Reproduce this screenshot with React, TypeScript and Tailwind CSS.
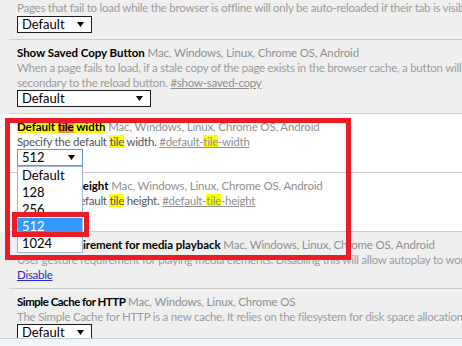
import React from "react";

const FONT = { fontFamily: "Lato, 'Open Sans', sans-serif" };

function Arrow() {
  return (
    <svg width="7" height="5" viewBox="0 0 7 5" className="block">
      <path d="M0 0 L7 0 L3.5 5 Z" fill="#000" />
    </svg>
  );
}

function Select({ label, w, focused }: { label: string; w: string; focused?: boolean }) {
  return (
    <div
      className={`${w} h-[17px] bg-white border flex items-center justify-between pl-[4px] pr-[7px] text-[13px] leading-[15px] text-black ${
        focused ? "border-[#5b9bd8]" : "border-[#1a1a1a]"
      }`}
    >
      <span>{label}</span>
      <Arrow />
    </div>
  );
}

const Y = ({ children }: { children: React.ReactNode }) => (
  <span className="bg-[#ffff00]">{children}</span>
);

function Section({
  white,
  children,
  first,
}: {
  white?: boolean;
  children: React.ReactNode;
  first?: boolean;
}) {
  return (
    <div className={white ? "bg-white" : "bg-[#efefef]"}>
      <div
        className={`ml-[9px] pl-[8px] border-b border-[#cdcdcd] ${
          first ? "pt-0" : "pt-[5px]"
        } pb-[6px] whitespace-nowrap text-[12px] leading-[15px]`}
      >
        {children}
      </div>
    </div>
  );
}

const Title = ({ children, tight }: { children: React.ReactNode; tight?: boolean }) => (
  <b className={`text-black text-[11.5px] ${tight ? "tracking-[-0.5px]" : "tracking-[-0.05px]"}`}>
    {children}
  </b>
);

const Platforms = ({ text }: { text: string }) => (
  <span className="text-[#8f8f8f] text-[11.5px] tracking-[-0.15px]"> {text}</span>
);

const Desc = ({ children, dark }: { children: React.ReactNode; dark?: boolean }) => (
  <div className={`text-[11.5px] tracking-[-0.25px] ${dark ? "text-[#555]" : "text-[#9c9c9c]"}`}>
    {children}
  </div>
);

const Hash = ({ children }: { children: React.ReactNode }) => (
  <span className="underline text-[#8f8f8f]">{children}</span>
);

export default function App() {
  return (
    <div className="relative w-[462px] h-[346px] overflow-hidden bg-[#efefef]" style={FONT}>
      <div className="w-[700px]">
        <Section first>
          <Desc>
            Pages that fail to load while the browser is offline will only be auto-reloaded if their tab is visible.
          </Desc>
          <div className="mt-[1px]">
            <Select label="Default" w="w-[75px]" />
          </div>
        </Section>

        <Section>
          <div>
            <Title>Show Saved Copy Button</Title>
            <Platforms text="Mac, Windows, Linux, Chrome OS, Android" />
          </div>
          <Desc>
            When a page fails to load, if a stale copy of the page exists in the browser cache, a button will be
          </Desc>
          <Desc>
            secondary to the reload button. <Hash>#show-saved-copy</Hash>
          </Desc>
          <Select label="Default" w="w-[134px]" />
        </Section>

        <Section white>
          <div>
            <Title>
              <Y>Default </Y>
              <span className="bg-[#ff9632]">tile</span>
              <Y> width</Y>
            </Title>
            <Platforms text="Mac, Windows, Linux, Chrome OS, Android" />
          </div>
          <Desc dark>
            Specify the default <Y>tile</Y> width.{" "}
            <Hash>
              #default-<Y>tile</Y>-width
            </Hash>
          </Desc>
          <Select label="512" w="w-[66px]" focused />
        </Section>

        <Section white>
          <div>
            <Title>
              Default <Y>tile</Y> height
            </Title>
            <Platforms text="Mac, Windows, Linux, Chrome OS, Android" />
          </div>
          <Desc dark>
            Specify the default <Y>tile</Y> height.{" "}
            <Hash>
              #default-<Y>tile</Y>-height
            </Hash>
          </Desc>
          <Select label="Default" w="w-[66px]" />
        </Section>

        <Section>
          <div>
            <Title>Gesture requirement for media playback</Title>
            <Platforms text="Mac, Windows, Linux, Chrome OS, Android" />
          </div>
          <Desc>
            User gesture requirement for playing media elements. Disabling this will allow autoplay to work.
          </Desc>
          <Desc>
            <span className="underline text-[#2a2ad0]">Disable</span>
          </Desc>
        </Section>

        <Section>
          <div>
            <Title tight>Simple Cache for HTTP</Title>
            <Platforms text="Mac, Windows, Linux, Chrome OS" />
          </div>
          <Desc>
            The Simple Cache for HTTP is a new cache. It relies on the filesystem for disk space allocation.{" "}
            <Hash>#enable-simple-cache-backend</Hash>
          </Desc>
          <Select label="Default" w="w-[75px]" />
        </Section>
      </div>

      {/* dropdown list */}
      <div className="absolute left-[17px] top-[166px] w-[66px] bg-white border border-[#9fb6d6] text-[13px] leading-[17px] text-black">
        <div className="pl-[4px] h-[17px]">Default</div>
        <div className="pl-[4px] h-[17px]">128</div>
        <div className="pl-[4px] h-[17px]">256</div>
        <div className="pl-[4px] h-[17px] bg-[#3399ff] text-white">512</div>
        <div className="pl-[4px] h-[17px]">1024</div>
      </div>

      {/* bottom strip */}
      <div className="absolute left-0 right-0 top-[338px] h-[8px] bg-[#f2f4f7] border-t border-[#c3cedb]" />

      {/* red annotation rectangles */}
      <div className="absolute left-[5px] top-[118px] w-[346px] h-[142px] border-[5px] border-[#ed1c24]" />
      <div className="absolute left-[12px] top-[212px] w-[77px] h-[25px] border-[5px] border-[#ed1c24]" />
    </div>
  );
}
